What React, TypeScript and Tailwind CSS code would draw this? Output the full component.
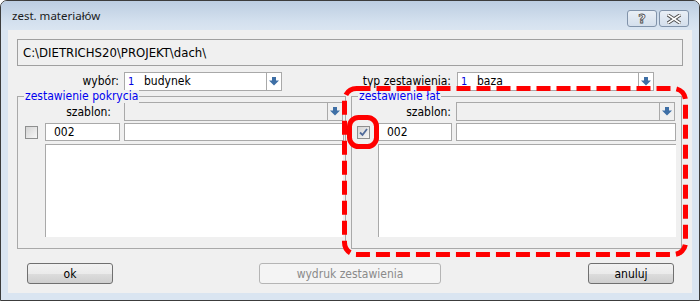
import React from "react";

function Arrow() {
  return (
    <svg width="10" height="9" viewBox="0 0 10 9">
      <path d="M3 0h4v3.5h3L5 8.5 0 3.5h3z" fill="#3e6fa6" />
    </svg>
  );
}

function Combo({ cls, num, text, disabled }: { cls: string; num?: string; text?: string; disabled?: boolean }) {
  return (
    <div className={`flex h-[19px] border border-[#a9a9a9] ${disabled ? "bg-[#f0f0f0]" : "bg-white"} ${cls}`}>
      <div className="flex flex-1 items-center">
        {num && <span className="w-[19px] pl-[3px] text-[11px] leading-none text-[#0000e0]">{num}</span>}
        {text && <span className="text-[12px] leading-none text-black">{text}</span>}
      </div>
      <div className="flex w-[15px] items-center justify-center border-l border-[#a9a9a9]">
        <Arrow />
      </div>
    </div>
  );
}

function Checkbox({ checked }: { checked?: boolean }) {
  return (
    <div className="flex h-[13px] w-[13px] items-center justify-center border border-[#8e8f8f] bg-gradient-to-br from-[#d4d4d4] to-[#f7f7f7]">
      {checked && (
        <svg width="9" height="9" viewBox="0 0 9 9">
          <path d="M1 4.5 L3.5 7 L8 1" fill="none" stroke="#4f6a9a" strokeWidth="1.8" />
        </svg>
      )}
    </div>
  );
}

function Input({ cls, text }: { cls: string; text?: string }) {
  return (
    <div className={`flex h-[18px] items-center border border-[#a9a9a9] bg-white pl-[8px] text-[12px] leading-none text-black ${cls}`}>
      {text}
    </div>
  );
}

function Button({ cls, label, disabled }: { cls: string; label: string; disabled?: boolean }) {
  return (
    <div
      className={`flex h-[21px] items-center justify-center rounded-[3px] border text-[12px] leading-none ${
        disabled
          ? "border-[#b5b5b5] bg-[#f4f4f4] text-[#8a8a8a]"
          : "border-[#707070] bg-[linear-gradient(#f2f2f2_0%,#ebebeb_50%,#dddddd_51%,#cfcfcf_100%)] text-black"
      } ${cls}`}
    >
      {label}
    </div>
  );
}

export default function App() {
  return (
    <div className="relative h-[301px] w-[700px] bg-white font-['DejaVu_Sans_Condensed','DejaVu_Sans',sans-serif]">
      <div className="flex h-full flex-col rounded-t-[7px] border border-[#3c3c3c] bg-[#dae5f1]">
        {/* title bar */}
        <div className="flex h-[29px] items-start rounded-t-[6px] bg-[linear-gradient(#bccde1,#d3e0ee_70%,#dae5f1)]">
          <div className="pl-[11px] pt-[9px] font-['Noto_Sans',sans-serif] text-[11.5px] leading-none text-[#1a1a1a]">
            zest. materiałów
          </div>
          <div className="ml-auto flex gap-[2px] pr-[10px] pt-[9px]">
            <div className="flex h-[17px] w-[30px] items-center justify-center rounded-[3px] border border-[#8193aa] bg-[linear-gradient(#e9eff6,#d4dfec)]">
              <span className="font-['DejaVu_Sans',sans-serif] text-[13px] font-bold leading-none text-white [-webkit-text-stroke:0.8px_#4a4a4a]">
                ?
              </span>
            </div>
            <div className="flex h-[17px] w-[30px] items-center justify-center rounded-[3px] border border-[#8193aa] bg-[linear-gradient(#e9eff6,#d4dfec)]">
              <svg width="14" height="10" viewBox="0 0 14 10">
                <path d="M1 1 L13 9 M13 1 L1 9" stroke="#4a4a4a" strokeWidth="3.4" strokeLinecap="square" />
                <path d="M1 1 L13 9 M13 1 L1 9" stroke="#ffffff" strokeWidth="1.6" strokeLinecap="square" />
              </svg>
            </div>
          </div>
        </div>

        {/* client */}
        <div className="mb-[7px] ml-[7px] mr-[7px] flex flex-1 flex-col bg-[#f0f0f0] pt-[9px]">
          <div className="ml-[9px] flex h-[27px] w-[666px] items-center border border-[#a0a0a0] pl-[5px] text-[13px] leading-none text-black">
            C:\DIETRICHS20\PROJEKT\dach\
          </div>

          <div className="mt-[6px] flex h-[18px] items-center text-[12px] leading-none text-black">
            <div className="w-[111px] text-right">wybór:</div>
            <Combo cls="ml-[5px] w-[158px]" num="1" text="budynek" />
            <div className="w-[169px] text-right">typ zestawienia:</div>
            <Combo cls="ml-[6px] w-[197px]" num="1" text="baza" />
          </div>

          <div className="mt-[6px] flex">
            <div className="relative ml-[9px] h-[153px] w-[329px] border border-[#a9a9a9] pt-[5px]">
              <span className="absolute left-[6px] top-[-7px] bg-[#f0f0f0] px-[1px] text-[12px] leading-[13px] text-[#0000f0]">
                zestawienie pokrycia
              </span>
              <div className="flex items-center">
                <div className="w-[93px] text-right text-[12px] leading-none text-black">szablon:</div>
                <Combo cls="ml-[13px] w-[219px]" disabled />
              </div>
              <div className="mt-[2px] flex items-center">
                <div className="ml-[7px]">
                  <Checkbox />
                </div>
                <Input cls="ml-[7px] w-[75px]" text="002" />
                <Input cls="ml-[4px] w-[220px]" />
              </div>
              <div className="ml-[27px] mt-[3px] h-[93px] w-[298px] border-l border-t border-[#a9a9a9] bg-white" />
            </div>

            <div className="relative ml-[5px] h-[153px] w-[331px] border border-[#a9a9a9] pt-[5px]">
              <span className="absolute left-[6px] top-[-7px] bg-[#f0f0f0] px-[1px] text-[12px] leading-[13px] text-[#0000f0]">
                zestawienie łat
              </span>
              <div className="flex items-center">
                <div className="w-[99px] text-right text-[12px] leading-none text-black">szablon:</div>
                <Combo cls="ml-[5px] w-[219px]" disabled />
              </div>
              <div className="mt-[2px] flex items-center">
                <div className="ml-[5px]">
                  <Checkbox checked />
                </div>
                <Input cls="ml-[8px] w-[74px]" text="002" />
                <Input cls="ml-[4px] w-[220px]" />
              </div>
              <div className="ml-[26px] mt-[3px] h-[93px] w-[298px] border-l border-t border-[#a9a9a9] bg-white" />
            </div>
          </div>

          <div className="mt-[14px] flex items-center">
            <Button cls="ml-[19px] w-[86px]" label="ok" />
            <Button cls="ml-[146px] w-[182px]" label="wydruk zestawienia" disabled />
            <Button cls="ml-[147px] w-[86px]" label="anuluj" />
          </div>
        </div>
      </div>

      {/* red annotation overlays */}
      <svg className="absolute left-[342px] top-[86px]" width="346" height="171" viewBox="0 0 346 171">
        <rect x="2.5" y="2.5" width="341" height="166" rx="12" fill="none" stroke="#ff0000" strokeWidth="5" strokeDasharray="14 6" />
      </svg>
      <svg className="absolute left-[347px] top-[115px]" width="32" height="34" viewBox="0 0 32 34">
        <rect x="2.5" y="2.5" width="27" height="29" rx="9" fill="none" stroke="#ff0000" strokeWidth="5" />
      </svg>
    </div>
  );
}
